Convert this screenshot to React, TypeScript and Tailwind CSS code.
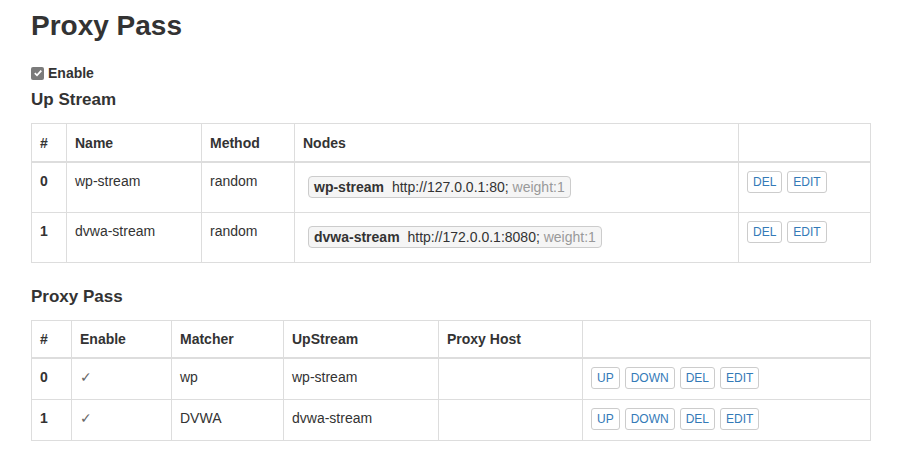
import React from "react";

const upstreams = [
  { id: 0, name: "wp-stream", method: "random", url: "http://127.0.0.1:80;", weight: "weight:1" },
  { id: 1, name: "dvwa-stream", method: "random", url: "http://172.0.0.1:8080;", weight: "weight:1" },
];

const passes = [
  { id: 0, matcher: "wp", upstream: "wp-stream" },
  { id: 1, matcher: "DVWA", upstream: "dvwa-stream" },
];

const Btn = ({ label, last }: { label: string; last?: boolean }) => (
  <span
    className={`inline-block border border-[#ccc] rounded-[3px] bg-white px-[5px] py-px text-[12px] leading-[18px] text-[#337ab7] ${
      last ? "" : "mr-[5px]"
    }`}
  >
    {label}
  </span>
);

const th = "border border-[#ddd] border-b-2 px-2 py-2 text-left align-bottom font-bold";
const td = "border border-[#ddd] px-2 py-2 align-top";

const App = () => {
  return (
    <div className="min-h-screen bg-white pl-[31px] pt-[10px] font-['Liberation_Sans',Arial,sans-serif] text-[14px] leading-5 text-[#333]">
      <h1 className="text-[28px] leading-[32px] font-bold">Proxy Pass</h1>

      <label className="mt-[21px] flex h-5 items-center gap-[4px] font-bold">
        <span className="flex h-[13px] w-[13px] items-center justify-center rounded-[2px] bg-[#7b7b7b]">
          <svg width="10" height="10" viewBox="0 0 10 10">
            <path d="M1.8 5.2 L4 7.3 L8.3 2.6" fill="none" stroke="white" strokeWidth="1.8" />
          </svg>
        </span>
        Enable
      </label>

      <h4 className="mt-[7px] text-[17px] leading-5 font-bold">Up Stream</h4>

      <table className="mt-[13px] w-[839px] table-fixed border-collapse">
        <colgroup>
          <col className="w-[35px]" />
          <col className="w-[135px]" />
          <col className="w-[93px]" />
          <col className="w-[444px]" />
          <col className="w-[132px]" />
        </colgroup>
        <thead>
          <tr>
            <th className={`${th} pt-[9px]`}>#</th>
            <th className={`${th} pt-[9px]`}>Name</th>
            <th className={`${th} pt-[9px]`}>Method</th>
            <th className={`${th} pt-[9px]`}>Nodes</th>
            <th className={`${th} pt-[9px]`}></th>
          </tr>
        </thead>
        <tbody>
          {upstreams.map((u) => (
            <tr key={u.id}>
              <td className={`${td} font-bold`}>{u.id}</td>
              <td className={td}>{u.name}</td>
              <td className={td}>{u.method}</td>
              <td className={td}>
                <span className="mx-[5px] mt-[5px] mb-[6px] inline-block rounded-[4px] border border-[#ccc] bg-[#f5f5f5] px-[5px] leading-5">
                  <b className="mr-1">{u.name}</b> {u.url}
                  <span className="text-[#999]"> {u.weight}</span>
                </span>
              </td>
              <td className={td}>
                <Btn label="DEL" />
                <Btn label="EDIT" last />
              </td>
            </tr>
          ))}
        </tbody>
      </table>

      <h4 className="mt-[24px] text-[17px] leading-5 font-bold">Proxy Pass</h4>

      <table className="mt-[13px] w-[839px] table-fixed border-collapse">
        <colgroup>
          <col className="w-[40px]" />
          <col className="w-[100px]" />
          <col className="w-[112px]" />
          <col className="w-[155px]" />
          <col className="w-[144px]" />
          <col className="w-[288px]" />
        </colgroup>
        <thead>
          <tr>
            <th className={th}>#</th>
            <th className={th}>Enable</th>
            <th className={th}>Matcher</th>
            <th className={th}>UpStream</th>
            <th className={th}>Proxy Host</th>
            <th className={th}></th>
          </tr>
        </thead>
        <tbody>
          {passes.map((p) => (
            <tr key={p.id}>
              <td className={`${td} font-bold`}>{p.id}</td>
              <td className={`${td} text-[#666]`}>✓</td>
              <td className={td}>{p.matcher}</td>
              <td className={td}>{p.upstream}</td>
              <td className={td}></td>
              <td className={td}>
                <span className="inline-block mb-[2px]">
                  <Btn label="UP" />
                  <Btn label="DOWN" />
                  <Btn label="DEL" />
                  <Btn label="EDIT" last />
                </span>
              </td>
            </tr>
          ))}
        </tbody>
      </table>
    </div>
  );
};

export default App;
